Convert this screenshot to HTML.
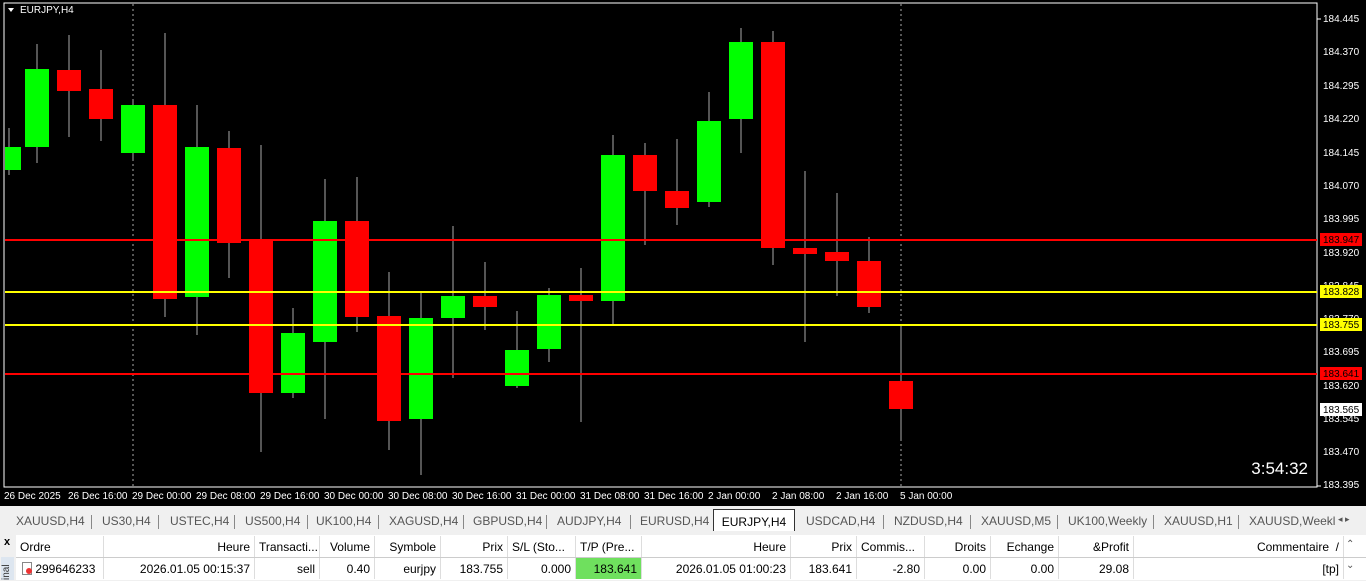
<!DOCTYPE html><html><head><style>
body{margin:0;width:1366px;height:580px;overflow:hidden;background:#f0f0f0;font-family:"Liberation Sans",sans-serif;position:relative}
.chart{position:absolute;left:0;top:0;width:1366px;height:506px;background:#000}
.tabs{position:absolute;left:0;top:507px;width:1366px;height:26px;background:#f0f0f0;font-size:12px;color:#555}
.tab{position:absolute;top:7px}
.sep{position:absolute;top:8px;width:1px;height:14px;background:#888}
.tbl{position:absolute;left:16px;top:535px;width:1350px;height:45px;background:#fff;font-size:12px;color:#000}
.c{position:absolute;height:21px;line-height:23px;white-space:nowrap;border-right:1px solid #ddd;box-sizing:border-box;padding:0 4px}
</style></head><body>
<div class="chart">
<svg width="1366" height="506" xmlns="http://www.w3.org/2000/svg" font-family="Liberation Sans,sans-serif">
<rect x="4" y="3" width="1313" height="484" fill="none" stroke="#fff" stroke-width="1"/>
<line x1="133" y1="4" x2="133" y2="487" stroke="#aaa" stroke-dasharray="2,3"/>
<line x1="901" y1="4" x2="901" y2="487" stroke="#aaa" stroke-dasharray="2,3"/>
<g id="cand"></g>
<line x1="5" y1="240" x2="1317" y2="240" stroke="#f00" stroke-width="2"/>
<line x1="5" y1="292" x2="1317" y2="292" stroke="#ff0" stroke-width="2"/>
<line x1="5" y1="325" x2="1317" y2="325" stroke="#ff0" stroke-width="2"/>
<line x1="5" y1="374" x2="1317" y2="374" stroke="#f00" stroke-width="2"/>
<path d="M8 8 L14 8 L11 12 Z" fill="#fff"/>
<text x="20" y="13" fill="#fff" font-size="10">EURJPY,H4</text>
<text x="1308" y="474" fill="#fff" font-size="17" text-anchor="end">3:54:32</text>
<g fill="#fff" font-size="10">
<text x="1323" y="22">184.445</text><text x="1323" y="55">184.370</text><text x="1323" y="89">184.295</text><text x="1323" y="122">184.220</text><text x="1323" y="156">184.145</text><text x="1323" y="189">184.070</text><text x="1323" y="222">183.995</text><text x="1323" y="256">183.920</text><text x="1323" y="289">183.845</text><text x="1323" y="322">183.770</text><text x="1323" y="355">183.695</text><text x="1323" y="389">183.620</text><text x="1323" y="422">183.545</text><text x="1323" y="455">183.470</text><text x="1323" y="488">183.395</text>
</g>
<rect x="1320" y="233" width="42" height="13" fill="#f00"/><text x="1323" y="243" font-size="10" fill="#000">183.947</text>
<rect x="1320" y="285" width="42" height="13" fill="#ff0"/><text x="1323" y="295" font-size="10" fill="#000">183.828</text>
<rect x="1320" y="318" width="42" height="13" fill="#ff0"/><text x="1323" y="328" font-size="10" fill="#000">183.755</text>
<rect x="1320" y="367" width="42" height="13" fill="#f00"/><text x="1323" y="377" font-size="10" fill="#000">183.641</text>
<rect x="1320" y="403" width="42" height="13" fill="#fff"/><text x="1323" y="413" font-size="10" fill="#000">183.565</text>
<g fill="#fff" font-size="10">
<text x="4" y="499">26 Dec 2025</text><text x="68" y="499">26 Dec 16:00</text><text x="132" y="499">29 Dec 00:00</text><text x="196" y="499">29 Dec 08:00</text><text x="260" y="499">29 Dec 16:00</text><text x="324" y="499">30 Dec 00:00</text><text x="388" y="499">30 Dec 08:00</text><text x="452" y="499">30 Dec 16:00</text><text x="516" y="499">31 Dec 00:00</text><text x="580" y="499">31 Dec 08:00</text><text x="644" y="499">31 Dec 16:00</text><text x="708" y="499">2 Jan 00:00</text><text x="772" y="499">2 Jan 08:00</text><text x="836" y="499">2 Jan 16:00</text><text x="900" y="499">5 Jan 00:00</text>
</g>
<g stroke="#fff"><line x1="1317" y1="19" x2="1321" y2="19"/><line x1="1317" y1="486" x2="1321" y2="486"/></g>
</svg>
</div>
<div class="tabs">
<div class="tab" style="left:16px">XAUUSD,H4</div><div class="sep" style="left:91px"></div>
<div class="tab" style="left:102px">US30,H4</div><div class="sep" style="left:158px"></div>
<div class="tab" style="left:170px">USTEC,H4</div><div class="sep" style="left:234px"></div>
<div class="tab" style="left:245px">US500,H4</div><div class="sep" style="left:307px"></div>
<div class="tab" style="left:316px">UK100,H4</div><div class="sep" style="left:378px"></div>
<div class="tab" style="left:389px">XAGUSD,H4</div><div class="sep" style="left:463px"></div>
<div class="tab" style="left:473px">GBPUSD,H4</div><div class="sep" style="left:546px"></div>
<div class="tab" style="left:557px">AUDJPY,H4</div><div class="sep" style="left:630px"></div>
<div class="tab" style="left:640px">EURUSD,H4</div>
<div style="position:absolute;left:713px;top:2px;width:80px;height:21px;background:#fff;border:1px solid #333;border-bottom:none;color:#000;font-size:12px;text-align:center;line-height:24px">EURJPY,H4</div>
<div class="tab" style="left:806px">USDCAD,H4</div><div class="sep" style="left:883px"></div>
<div class="tab" style="left:894px">NZDUSD,H4</div><div class="sep" style="left:970px"></div>
<div class="tab" style="left:981px">XAUUSD,M5</div><div class="sep" style="left:1057px"></div>
<div class="tab" style="left:1068px">UK100,Weekly</div><div class="sep" style="left:1153px"></div>
<div class="tab" style="left:1164px">XAUUSD,H1</div><div class="sep" style="left:1238px"></div>
<div class="tab" style="left:1249px">XAUUSD,Weekl</div>
<div class="tab" style="left:1338px;font-size:9px">◂ ▸</div>
</div>
<div style="position:absolute;left:0;top:535px;width:16px;height:45px;background:#f0f0f0;font-size:11px"><div style="position:absolute;left:4px;top:1px;font-weight:bold">x</div><div style="position:absolute;left:1px;top:22px;width:13px;height:23px;background:#dde6f0;font-size:10px;writing-mode:vertical-rl;transform:rotate(180deg);color:#333">inal</div></div>
<div class="tbl">
<div style="position:absolute;left:0;top:0;width:1350px;height:22px;border-bottom:1px solid #ccc"></div>
<div class="c" style="left:0;width:88px;top:1px">Ordre</div>
<div class="c" style="left:88px;width:151px;top:1px;text-align:right">Heure</div>
<div class="c" style="left:239px;width:65px;top:1px">Transacti...</div>
<div class="c" style="left:304px;width:55px;top:1px;text-align:right">Volume</div>
<div class="c" style="left:359px;width:66px;top:1px;text-align:right">Symbole</div>
<div class="c" style="left:425px;width:67px;top:1px;text-align:right">Prix</div>
<div class="c" style="left:492px;width:68px;top:1px">S/L (Sto...</div>
<div class="c" style="left:560px;width:66px;top:1px">T/P (Pre...</div>
<div class="c" style="left:626px;width:149px;top:1px;text-align:right">Heure</div>
<div class="c" style="left:775px;width:66px;top:1px;text-align:right">Prix</div>
<div class="c" style="left:841px;width:68px;top:1px">Commis...</div>
<div class="c" style="left:909px;width:66px;top:1px;text-align:right">Droits</div>
<div class="c" style="left:975px;width:68px;top:1px;text-align:right">Echange</div>
<div class="c" style="left:1043px;width:75px;top:1px;text-align:right">&amp;Profit</div>
<div class="c" style="left:1118px;width:210px;top:1px;text-align:right">Commentaire &nbsp;/</div>
<div class="c" style="left:0;width:88px;top:23px;padding-left:6px"><span style="display:inline-block;width:8px;height:11px;border:1px solid #888;vertical-align:-2px;position:relative"><span style="position:absolute;left:3px;top:5px;width:6px;height:6px;border-radius:3px;background:#e33"></span></span> 299646233</div>
<div class="c" style="left:88px;width:151px;top:23px;text-align:right">2026.01.05 00:15:37</div>
<div class="c" style="left:239px;width:65px;top:23px;text-align:right">sell</div>
<div class="c" style="left:304px;width:55px;top:23px;text-align:right">0.40</div>
<div class="c" style="left:359px;width:66px;top:23px;text-align:right">eurjpy</div>
<div class="c" style="left:425px;width:67px;top:23px;text-align:right">183.755</div>
<div class="c" style="left:492px;width:68px;top:23px;text-align:right">0.000</div>
<div class="c" style="left:560px;width:66px;top:23px;text-align:right;background:#6fe05e">183.641</div>
<div class="c" style="left:626px;width:149px;top:23px;text-align:right">2026.01.05 01:00:23</div>
<div class="c" style="left:775px;width:66px;top:23px;text-align:right">183.641</div>
<div class="c" style="left:841px;width:68px;top:23px;text-align:right">-2.80</div>
<div class="c" style="left:909px;width:66px;top:23px;text-align:right">0.00</div>
<div class="c" style="left:975px;width:68px;top:23px;text-align:right">0.00</div>
<div class="c" style="left:1043px;width:75px;top:23px;text-align:right">29.08</div>
<div class="c" style="left:1118px;width:210px;top:23px;text-align:right">[tp]</div>
<div style="position:absolute;left:1330px;top:4px;font-size:10px;color:#555">⌃</div>
<div style="position:absolute;left:1330px;top:25px;font-size:10px;color:#555">⌄</div>
</div>
<script>
var d=[[9,1,147,170,128,175],[37,1,69,147,44,163],[69,0,70,91,35,137],[101,0,89,119,50,141],[133,1,105,153,100,160],[165,0,105,299,33,317],[197,1,147,297,105,335],[229,0,148,243,131,278],[261,0,241,393,145,452],[293,1,333,393,308,398],[325,1,221,342,179,419],[357,0,221,317,177,332],[389,0,316,421,272,450],[421,1,318,419,293,475],[453,1,296,318,226,378],[485,0,296,307,262,330],[517,1,350,386,311,388],[549,1,295,349,288,362],[581,0,295,301,268,422],[613,1,155,301,135,325],[645,0,155,191,143,245],[677,0,191,208,139,225],[709,1,121,202,92,207],[741,1,42,119,28,153],[773,0,42,248,31,265],[805,0,248,254,171,342],[837,0,252,261,193,296],[869,0,261,307,237,313],[901,0,381,409,324,440]];
var s='';d.forEach(function(c){var col=c[1]?'#00ff00':'#ff0000';var x0=Math.max(5,c[0]-12);var w=c[0]+12-x0;
s+='<line x1="'+c[0]+'" y1="'+c[4]+'" x2="'+c[0]+'" y2="'+c[5]+'" stroke="#aaa"/>';
s+='<rect x="'+x0+'" y="'+c[2]+'" width="'+w+'" height="'+(c[3]-c[2])+'" fill="'+col+'"/>';});
document.getElementById('cand').innerHTML=s;
</script>
</body></html>
